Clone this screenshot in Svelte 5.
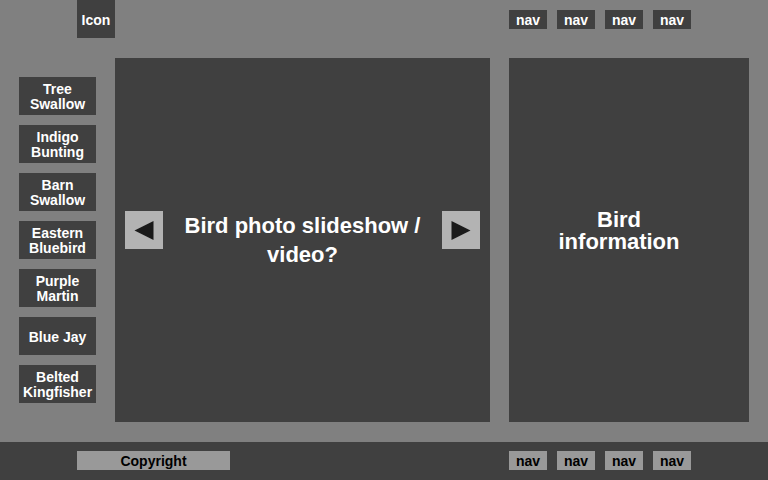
<script>
  const birds = [
    ['Tree', 'Swallow'],
    ['Indigo', 'Bunting'],
    ['Barn', 'Swallow'],
    ['Eastern', 'Bluebird'],
    ['Purple', 'Martin'],
    ['Blue Jay'],
    ['Belted', 'Kingfisher']
  ];
  const links = ['nav', 'nav', 'nav', 'nav'];
</script>

<div class="page">
  <header class="columns">
    <a class="icon" href="#home">Icon</a>
    <nav class="links" aria-label="Main">
      {#each links as link}
        <a href="#top">{link}</a>
      {/each}
    </nav>
  </header>

  <main class="columns">
    <aside>
      {#each birds as bird}
        <button type="button">
          {#each bird as line}<span>{line}</span>{/each}
        </button>
      {/each}
    </aside>
    <section class="panel">
      <div class="slideshow">
        <button type="button" aria-label="Previous">
          <svg viewBox="0 0 38 38"><path d="M9.5 19.5 28.5 10v19z" /></svg>
        </button>
        <h1>Bird photo slideshow / video?</h1>
        <button type="button" aria-label="Next">
          <svg viewBox="0 0 38 38"><path d="M28.5 19.5 9.5 10v19z" /></svg>
        </button>
      </div>
    </section>
    <section class="panel info">
      <h2>Bird<br />information</h2>
    </section>
  </main>

  <footer class="columns">
    <p class="copyright">Copyright</p>
    <nav class="links" aria-label="Footer">
      {#each links as link}
        <a href="#top">{link}</a>
      {/each}
    </nav>
  </footer>
</div>

<style>
  :global(body) {
    margin: 0;
  }
  .page {
    display: flex;
    flex-direction: column;
    min-height: 100vh;
    background: #808080;
    color: #fff;
    font: bold 14px/15px 'Liberation Sans', Arial, sans-serif;
  }
  .columns {
    display: grid;
    grid-template-columns: 77px minmax(0, 375fr) minmax(0, 240fr);
    column-gap: 19px;
    padding: 0 19px;
  }
  a {
    color: inherit;
    text-decoration: none;
  }
  button {
    padding: 0;
    border: 0;
    color: inherit;
    font: inherit;
    cursor: pointer;
  }
  h1,
  h2,
  p {
    margin: 0;
  }
  header {
    height: 58px;
  }
  .icon,
  .copyright {
    grid-column: 1 / 3;
    margin-left: 58px;
    text-align: center;
  }
  .icon {
    width: 38px;
    height: 38px;
    line-height: 40px;
    background: #404040;
  }
  .links {
    display: flex;
    gap: 10px;
    padding-top: 10px;
  }
  .links a {
    width: 38px;
    height: 19px;
    line-height: 20px;
    text-align: center;
    background: #404040;
  }
  main {
    flex: 1;
    margin-bottom: 20px;
  }
  aside {
    display: flex;
    flex-direction: column;
    gap: 10px;
    padding-top: 19px;
  }
  aside button {
    display: flex;
    flex-direction: column;
    align-items: center;
    justify-content: center;
    height: 38px;
    padding-top: 2px;
    background: #404040;
  }
  .panel {
    display: flex;
    flex-direction: column;
    justify-content: center;
    padding-bottom: 20px;
    background: #404040;
    text-align: center;
  }
  .info {
    padding-right: 20px;
    padding-bottom: 18px;
  }
  .slideshow {
    display: flex;
    justify-content: space-between;
    gap: 20px;
    height: 38px;
    padding: 0 10px;
  }
  .slideshow button {
    flex: none;
    width: 38px;
    height: 38px;
    background: #b3b3b3;
  }
  svg {
    display: block;
    fill: #1a1a1a;
  }
  h1 {
    font-size: 22px;
    line-height: 29px;
  }
  h2 {
    font-size: 22px;
    line-height: 22px;
  }
  footer {
    height: 38px;
    background: #404040;
  }
  .copyright {
    width: 153px;
    height: 19px;
    margin-top: 9px;
    line-height: 20px;
    background: #999;
    color: #000;
  }
  footer .links {
    padding-top: 9px;
    color: #000;
  }
  footer .links a {
    background: #999;
  }
</style>
